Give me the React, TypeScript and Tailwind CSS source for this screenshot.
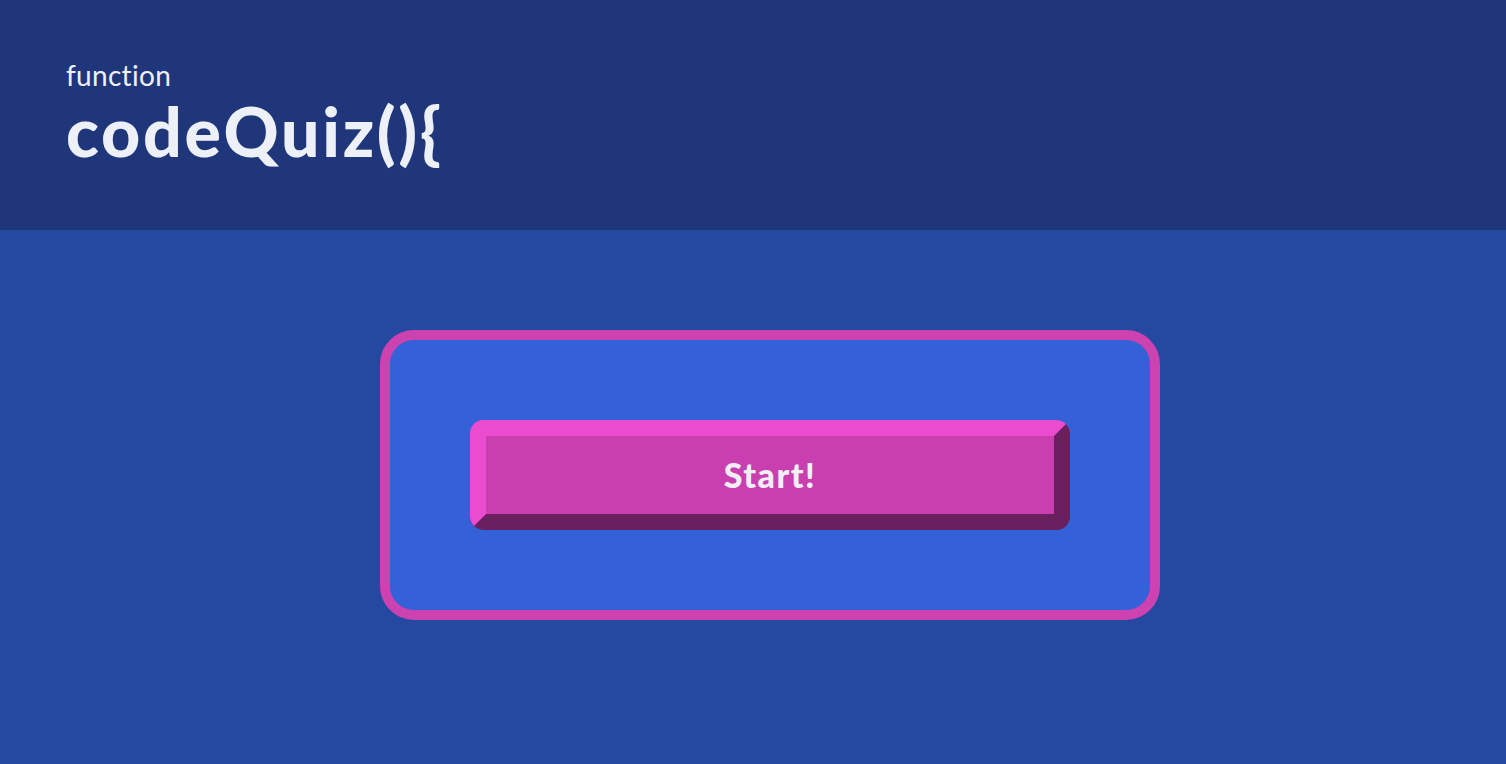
export default function App() {
  return (
    <div className="min-h-screen flex flex-col bg-[#2548a0] font-['Lato','Open_Sans',sans-serif] text-[#eef0f8]">
      <header className="h-[230px] bg-[#1f367a] px-[66px] pt-[57px]">
        <p className="text-[28px] leading-[36px] tracking-[0.3px]">function</p>
        <h1 className="mt-[2px] text-[68px] leading-[72px] font-black tracking-[2.7px]">codeQuiz(){'{'}</h1>
      </header>

      <main className="flex pt-[100px] pl-[380px]">
        <div className="w-[780px] h-[290px] rounded-[34px] border-[10px] border-[#cc42b0] bg-[#3461d8] flex justify-center pt-[80px]">
          <button className="w-[600px] h-[110px] rounded-[14px] border-[16px] border-t-[#ea4bcf] border-l-[#ea4bcf] border-b-[#6a1f5e] border-r-[#6a1f5e] bg-[#c93fb0] text-[34px] font-black tracking-[1.5px] text-[#f1eef6] leading-none">
            Start!
          </button>
        </div>
      </main>
    </div>
  )
}
